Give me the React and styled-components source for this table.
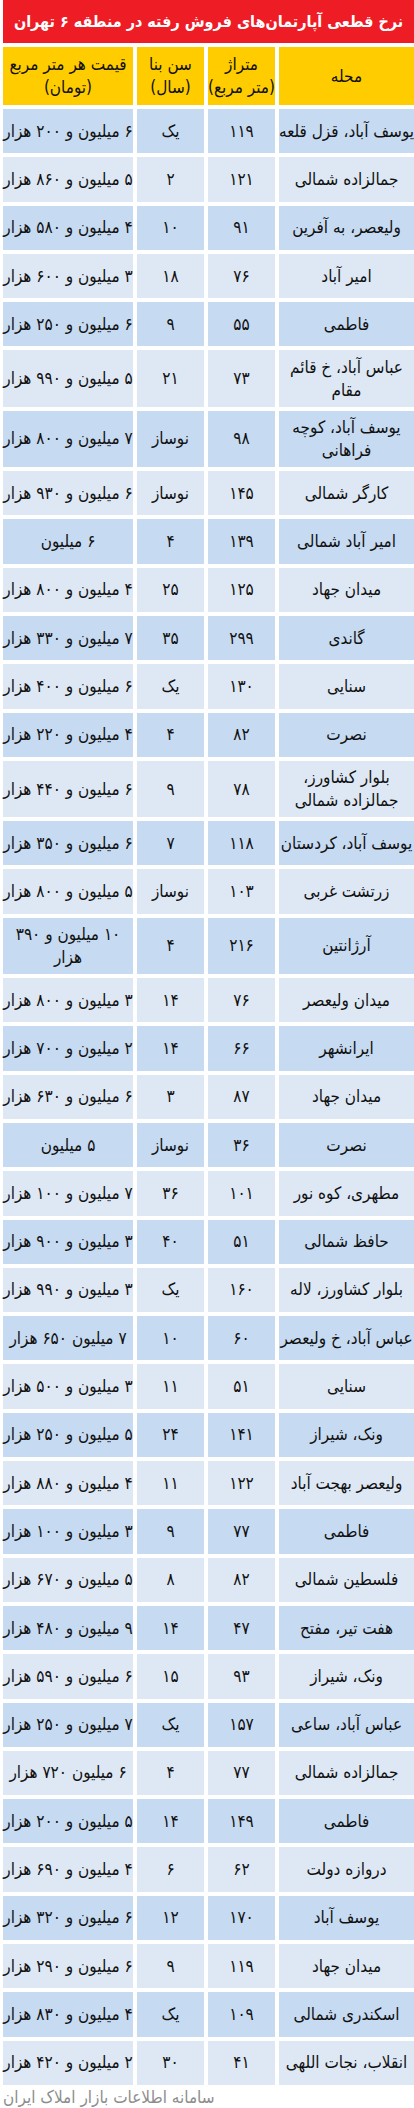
import React from "react";
import styled, { createGlobalStyle } from "styled-components";

const GlobalStyle = createGlobalStyle`
  html, body { margin: 0; padding: 0; background: #ffffff; }
  body { font-family: "DejaVu Sans Condensed", "DejaVu Sans", sans-serif; }
`;

const COLS = "135px 67px 67px 130px";
const FONT = `"DejaVu Sans Condensed", "DejaVu Sans", sans-serif`;

const Page = styled.div`
  direction: rtl;
  width: 414px;
  box-sizing: border-box;
  padding: 0 0 0 3px;
  display: flex;
  flex-direction: column;
  gap: 4px;
  font-family: ${FONT};
  color: #111;
`;

const Title = styled.h1`
  margin: 0;
  height: 43px;
  background: #ee1c25;
  color: #ffffff;
  font-family: ${FONT};
  font-size: 16px;
  font-weight: bold;
  display: flex;
  align-items: center;
  justify-content: center;
  white-space: nowrap;
  overflow: hidden;
`;

const Table = styled.div`
  display: flex;
  flex-direction: column;
  gap: 4px;
`;

const Row = styled.div`
  display: grid;
  grid-template-columns: ${COLS};
  column-gap: 4px;
  height: ${(p) => p.$h}px;
`;

const Cell = styled.div`
  background: ${(p) => p.$bg};
  display: flex;
  align-items: center;
  justify-content: center;
  text-align: center;
  font-size: 17px;
  line-height: 23px;
  white-space: nowrap;
  overflow: visible;
`;

const HeadCell = styled(Cell)`
  flex-direction: column;
  line-height: 23px;
`;

const Lines = styled.div`
  display: flex;
  flex-direction: column;
  align-items: center;
  line-height: 23px;
`;

const Footer = styled.div`
  display: flex;
  justify-content: flex-end;
  color: #8d8d8d;
  font-size: 17px;
  line-height: 20px;
  margin-top: -2px;
`;

const FooterText = styled.span`
  white-space: nowrap;
`;

const YELLOW = "#ffcc00";
const DARK = "#c6daf1";
const LIGHT = "#dee8f5";

const rows = [
  ["یوسف آباد، قزل قلعه", "۱۱۹", "یک", "۶ میلیون و ۲۰۰ هزار"],
  ["جمالزاده شمالی", "۱۲۱", "۲", "۵ میلیون و ۸۶۰ هزار"],
  ["ولیعصر، به آفرین", "۹۱", "۱۰", "۴ میلیون و ۵۸۰ هزار"],
  ["امیر آباد", "۷۶", "۱۸", "۳ میلیون و ۶۰۰ هزار"],
  ["فاطمی", "۵۵", "۹", "۶ میلیون و ۲۵۰ هزار"],
  [["عباس آباد، خ قائم", "مقام"], "۷۳", "۲۱", "۵ میلیون و ۹۹۰ هزار"],
  [["یوسف آباد، کوچه", "فراهانی"], "۹۸", "نوساز", "۷ میلیون و ۸۰۰ هزار"],
  ["کارگر شمالی", "۱۴۵", "نوساز", "۶ میلیون و ۹۳۰ هزار"],
  ["امیر آباد شمالی", "۱۳۹", "۴", "۶ میلیون"],
  ["میدان جهاد", "۱۲۵", "۲۵", "۴ میلیون و ۸۰۰ هزار"],
  ["گاندی", "۲۹۹", "۳۵", "۷ میلیون و ۳۳۰ هزار"],
  ["سنایی", "۱۳۰", "یک", "۶ میلیون و ۴۰۰ هزار"],
  ["نصرت", "۸۲", "۴", "۴ میلیون و ۲۲۰ هزار"],
  [["بلوار کشاورز،", "جمالزاده شمالی"], "۷۸", "۹", "۶ میلیون و ۴۴۰ هزار"],
  ["یوسف آباد، کردستان", "۱۱۸", "۷", "۶ میلیون و ۳۵۰ هزار"],
  ["زرتشت غربی", "۱۰۳", "نوساز", "۵ میلیون و ۸۰۰ هزار"],
  ["آرژانتین", "۲۱۶", "۴", ["۱۰ میلیون و ۳۹۰", "هزار"]],
  ["میدان ولیعصر", "۷۶", "۱۴", "۳ میلیون و ۸۰۰ هزار"],
  ["ایرانشهر", "۶۶", "۱۴", "۲ میلیون و ۷۰۰ هزار"],
  ["میدان جهاد", "۸۷", "۳", "۶ میلیون و ۶۳۰ هزار"],
  ["نصرت", "۳۶", "نوساز", "۵ میلیون"],
  ["مطهری، کوه نور", "۱۰۱", "۳۶", "۷ میلیون و ۱۰۰ هزار"],
  ["حافظ شمالی", "۵۱", "۴۰", "۳ میلیون و ۹۰۰ هزار"],
  ["بلوار کشاورز، لاله", "۱۶۰", "یک", "۳ میلیون و ۹۹۰ هزار"],
  ["عباس آباد، خ ولیعصر", "۶۰", "۱۰", "۷ میلیون ۶۵۰ هزار"],
  ["سنایی", "۵۱", "۱۱", "۳ میلیون و ۵۰۰ هزار"],
  ["ونک، شیراز", "۱۴۱", "۲۴", "۵ میلیون و ۲۵۰ هزار"],
  ["ولیعصر بهجت آباد", "۱۲۲", "۱۱", "۴ میلیون و ۸۸۰ هزار"],
  ["فاطمی", "۷۷", "۹", "۳ میلیون و ۱۰۰ هزار"],
  ["فلسطین شمالی", "۸۲", "۸", "۵ میلیون و ۶۷۰ هزار"],
  ["هفت تیر، مفتح", "۴۷", "۱۴", "۹ میلیون و ۴۸۰ هزار"],
  ["ونک، شیراز", "۹۳", "۱۵", "۶ میلیون و ۵۹۰ هزار"],
  ["عباس آباد، ساعی", "۱۵۷", "یک", "۷ میلیون و ۲۵۰ هزار"],
  ["جمالزاده شمالی", "۷۷", "۴", "۶ میلیون ۷۲۰ هزار"],
  ["فاطمی", "۱۴۹", "۱۴", "۵ میلیون و ۲۰۰ هزار"],
  ["دروازه دولت", "۶۲", "۶", "۴ میلیون و ۶۹۰ هزار"],
  ["یوسف آباد", "۱۷۰", "۱۲", "۶ میلیون و ۳۲۰ هزار"],
  ["میدان جهاد", "۱۱۹", "۹", "۶ میلیون و ۲۹۰ هزار"],
  ["اسکندری شمالی", "۱۰۹", "یک", "۴ میلیون و ۸۳۰ هزار"],
  ["انقلاب، نجات اللهی", "۴۱", "۳۰", "۲ میلیون و ۴۲۰ هزار"],
];

function Content({ value }) {
  if (Array.isArray(value)) {
    return (
      <Lines>
        {value.map((l, i) => (
          <span key={i}>{l}</span>
        ))}
      </Lines>
    );
  }
  return value;
}

export default function App() {
  return (
    <>
      <GlobalStyle />
      <Page>
        <Title>نرخ قطعی آپارتمان‌های فروش رفته در منطقه ۶ تهران</Title>
        <Table>
          <Row $h={58}>
            <HeadCell $bg={YELLOW}>محله</HeadCell>
            <HeadCell $bg={YELLOW}>
              <span>متراژ</span>
              <span>(متر مربع)</span>
            </HeadCell>
            <HeadCell $bg={YELLOW}>
              <span>سن بنا</span>
              <span>(سال)</span>
            </HeadCell>
            <HeadCell $bg={YELLOW}>
              <span>قیمت هر متر مربع</span>
              <span>(تومان)</span>
            </HeadCell>
          </Row>
          {rows.map((r, i) => {
            const tall = r.some((v) => Array.isArray(v));
            const bg = i % 2 === 0 ? DARK : LIGHT;
            return (
              <Row key={i} $h={tall ? 56.3 : 44.3}>
                {r.map((v, j) => (
                  <Cell key={j} $bg={bg}>
                    <Content value={v} />
                  </Cell>
                ))}
              </Row>
            );
          })}
        </Table>
        <Footer>
          <FooterText>سامانه اطلاعات بازار املاک ایران</FooterText>
        </Footer>
      </Page>
    </>
  );
}
